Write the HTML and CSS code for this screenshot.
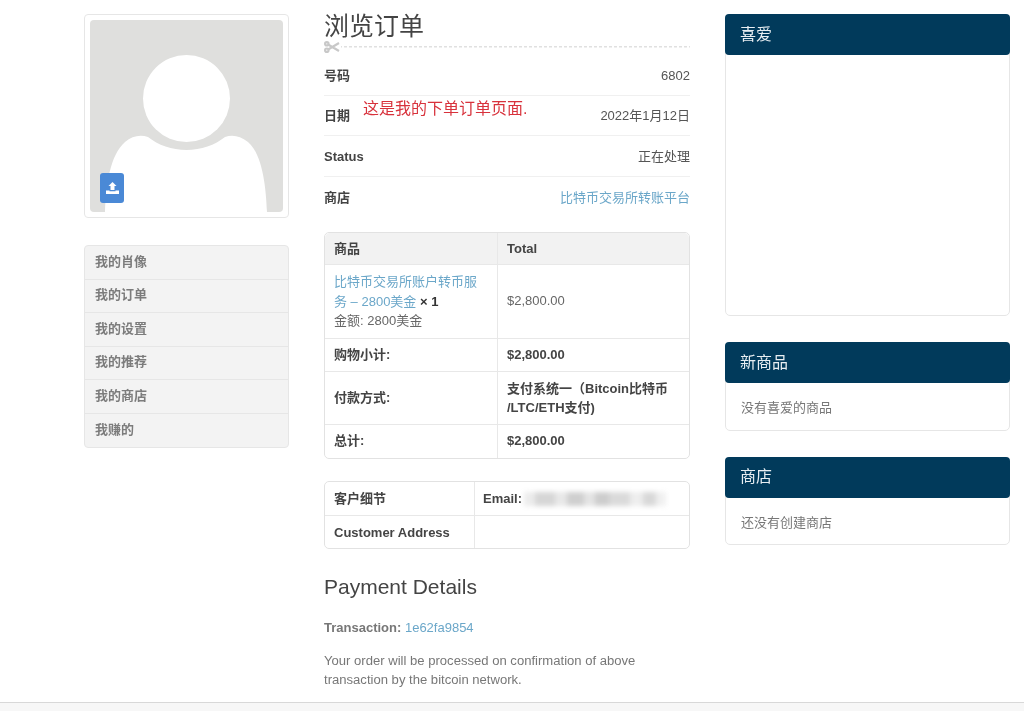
FILE: index.html
```html
<!DOCTYPE html>
<html lang="zh-CN">
<head>
<meta charset="utf-8">
<title>浏览订单</title>
<link rel="stylesheet" href="styles.css">
</head>
<body>
<div class="page">
  <aside class="left">
    <div class="avatar">
      <div class="avatar-inner">
        <svg class="avatar-art" viewBox="0 0 193 192" preserveAspectRatio="none">
          <circle cx="96.500" cy="78.500" r="43.500" fill="#fff"/>
          <path d="M15 192 C16 165 20 135 35 122 C42 116 50 114.500 58 117 C68 125 82 130 96.500 130 C111 130 125 125 135 117 C143 114.500 150 116 158 122 C172 134 176 165 177 192 Z" fill="#fff"/>
        </svg>
        <span class="upload">
          <svg viewBox="0 0 13 12" width="13" height="12"><path d="M6.500 0 L10.500 4 H8.500 V8 H4.500 V4 H2.500 Z M0 8.500 H3.500 V9.300 H9.500 V8.500 H13 V12 H0 Z" fill="#fff"/></svg>
        </span>
      </div>
    </div>
    <nav class="menu">
      <a class="menu-item">我的肖像</a>
      <a class="menu-item">我的订单</a>
      <a class="menu-item">我的设置</a>
      <a class="menu-item">我的推荐</a>
      <a class="menu-item">我的商店</a>
      <a class="menu-item">我赚的</a>
    </nav>
  </aside>

  <main class="middle">
    <h1 class="title">浏览订单</h1>
    <div class="cut">
      <svg class="scissors" viewBox="0 0 17 12" width="17" height="12"><g fill="none" stroke="#c8c8c8" stroke-width="2.200"><circle cx="2.800" cy="2.800" r="1.700"/><circle cx="2.800" cy="9.200" r="1.700"/><path d="M4.500 3.800 L15 10 M4.500 8.200 L15 2"/></g></svg>
    </div>
    <div class="info">
      <div class="info-row"><b>号码</b><span>6802</span></div>
      <div class="info-row date-row"><b>日期</b><span>2022年1月12日</span><em class="note">这是我的下单订单页面.</em></div>
      <div class="info-row"><b>Status</b><span>正在处理</span></div>
      <div class="info-row"><b>商店</b><a class="link">比特币交易所转账平台</a></div>
    </div>

    <table class="tbl order">
      <tr class="head"><th class="c1">商品</th><th>Total</th></tr>
      <tr><td class="c1 item-cell"><a class="link">比特币交易所账户转币服务 – 2800美金</a> <b>× 1</b><br>金额: 2800美金</td><td>$2,800.00</td></tr>
      <tr><th class="c1">购物小计:</th><th>$2,800.00</th></tr>
      <tr><th class="c1">付款方式:</th><th class="pay-cell">支付系统一（Bitcoin比特币<br>/LTC/ETH支付)</th></tr>
      <tr><th class="c1">总计:</th><th>$2,800.00</th></tr>
    </table>

    <table class="tbl customer">
      <tr><th class="c2">客户细节</th><th><span class="email">Email:<i class="blur"></i></span></th></tr>
      <tr><th class="c2">Customer Address</th><td></td></tr>
    </table>

    <h2 class="sub">Payment Details</h2>
    <p class="txn"><b>Transaction:</b> <a class="link">1e62fa9854</a></p>
    <p class="desc">Your order will be processed on confirmation of above transaction by the bitcoin network.</p>
  </main>

  <aside class="right">
    <section class="panel tall"><h3 class="panel-head">喜爱</h3></section>
    <section class="panel"><h3 class="panel-head">新商品</h3><p class="panel-body">没有喜爱的商品</p></section>
    <section class="panel"><h3 class="panel-head">商店</h3><p class="panel-body">还没有创建商店</p></section>
  </aside>
</div>
<footer class="foot"></footer>
</body>
</html>
```

FILE: styles.css
```css
* { box-sizing: border-box; }
html, body { margin: 0; height: 711px; overflow: hidden; }
body {
  background: #fff;
  color: #444;
  font: 13px/18.6px "Liberation Sans", "Noto Sans CJK SC", sans-serif;
  filter: blur(0.35px);
}
.page {
  height: 702px;
  padding: 14px 14px 0 84px;
  display: grid;
  grid-template-columns: 205px 366px 285px;
  column-gap: 35px;
  overflow: hidden;
}
.left { display: flex; flex-direction: column; gap: 27px; }
.avatar {
  height: 204px;
  padding: 5px;
  border: 1px solid #e6e6e6;
  border-radius: 4px;
}
.avatar-inner {
  position: relative;
  height: 192px;
  background: #dfdfdd;
  border-radius: 4px;
  overflow: hidden;
}
.avatar-art { display: block; width: 100%; height: 100%; }
.upload {
  position: absolute;
  left: 10px;
  bottom: 9px;
  width: 24px;
  height: 30px;
  border-radius: 3px;
  background: #4a89d6;
  display: flex;
  align-items: center;
  justify-content: center;
}
.menu {
  display: flex;
  flex-direction: column;
  border: 1px solid #e6e6e6;
  border-radius: 4px;
  background: #f3f3f3;
}
.menu-item {
  height: 33.500px;
  padding: 0 10px;
  display: flex;
  align-items: center;
  font-weight: 700;
  color: #7c7c7c;
  border-bottom: 1px solid #e6e6e6;
}
.menu-item:last-child { border-bottom: 0; height: 33px; }

.title {
  margin: -2px 0 0;
  font-size: 25px;
  line-height: 28px;
  font-weight: 400;
  color: #444;
}
.cut {
  height: 12px;
  margin-top: 1px;
  display: flex;
  align-items: center;
  background: repeating-linear-gradient(90deg, #e0e0e0 0 3px, transparent 3px 5px) 0 5px / 100% 1.500px no-repeat;
}
.scissors { display: block; background: #fff; }
.info { margin-top: 2px; }
.info-row {
  position: relative;
  height: 40.700px;
  padding-top: 2px;
  display: flex;
  justify-content: space-between;
  align-items: center;
  border-bottom: 1px solid #f0f0f0;
  color: #555;
}
.info-row:last-child { border-bottom: 0; }
.info-row b { color: #444; }
.note {
  position: absolute;
  left: 39px;
  top: 2px;
  font-style: normal;
  font-size: 16px;
  line-height: 22px;
  color: #d8323c;
}
.link { color: #6ba7c9; }

.tbl {
  width: 100%;
  border-collapse: separate;
  border-spacing: 0;
  table-layout: fixed;
  border: 1px solid #e2e2e2;
  border-radius: 5px;
}
.tbl th, .tbl td {
  padding: 7px 9px;
  text-align: left;
  vertical-align: middle;
  border-bottom: 1px solid #e8e8e8;
  border-left: 1px solid #e8e8e8;
  color: #444;
}
.tbl td { color: #666; font-weight: 400; }
.tbl tr:last-child th, .tbl tr:last-child td { border-bottom: 0; }
.tbl tr > :first-child { border-left: 0; }
.tbl .item-cell { line-height: 19.500px; }
.tbl .pay-cell { line-height: 19px; }
.order { margin-top: 14px; }
.order .c1 { width: 172px; }
.order td b { color: #333; }
.order .head th { background: #f2f2f2; padding: 7px 9px 6px; }
.order .head th:first-child { border-top-left-radius: 5px; }
.order .head th:last-child { border-top-right-radius: 5px; }
.customer { margin-top: 22px; }
.customer .c2 { width: 149px; }
.customer th { padding: 8px 9px 6px; }
.customer th:last-child { padding-left: 8px; }
.email { display: inline-flex; align-items: center; }
.blur {
  display: inline-block;
  width: 142px;
  height: 14px;
  margin-left: 2px;
  background: linear-gradient(90deg, #ececec 0 8%, #d6d6d6 8% 22%, #e8e8e8 22% 30%, #cfcfcf 30% 42%, #e4e4e4 42% 50%, #cdcdcd 50% 60%, #dadada 60% 75%, #eeeeee 75% 84%, #d8d8d8 84% 93%, #f0f0f0 93%);
  filter: blur(2.500px);
}
.sub {
  margin: 24px 0 0;
  font-size: 21px;
  line-height: 28px;
  font-weight: 400;
  color: #444;
}
.txn { margin: 18px 0 0; color: #777; }
.txn b { color: #777; }
.desc { margin: 13px 0 0; color: #777; font-size: 13.080px; line-height: 19.500px; }

.right { display: flex; flex-direction: column; gap: 26px; }
.panel {
  border: 1px solid #e6e6e6;
  border-radius: 5px;
  background: #fff;
}
.panel.tall { height: 302px; }
.panel-head {
  margin: -1px -1px 0;
  height: 41px;
  padding: 1px 15px 0;
  display: flex;
  align-items: center;
  background: #013a5b;
  color: #e8eef2;
  border-radius: 4px;
  font-size: 16px;
  font-weight: 400;
}
.panel-body {
  margin: 0;
  padding: 16px 15px 12px;
  color: #777;
}
.foot {
  height: 9px;
  background: #f7f7f7;
  border-top: 1px solid #d8d8d8;
}
```
